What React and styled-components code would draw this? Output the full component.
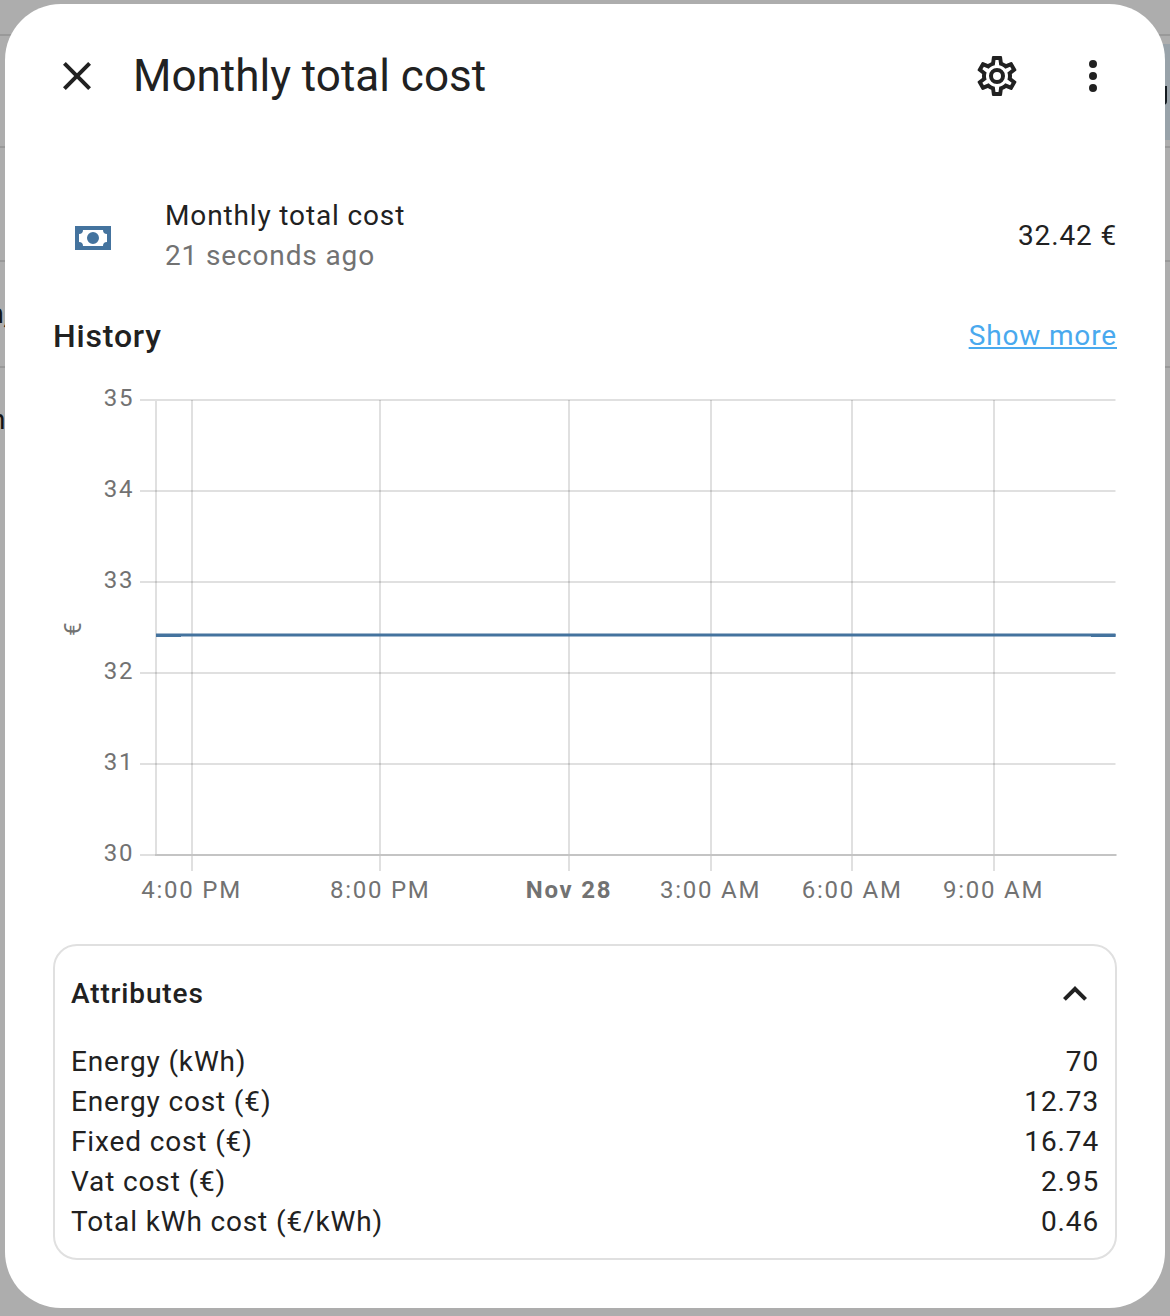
import React from "react";
import styled, { createGlobalStyle } from "styled-components";

const Global = createGlobalStyle`
  * { box-sizing: border-box; }
  body {
    margin: 0;
    background: #adadad;
    font-family: Roboto, "Liberation Sans", sans-serif;
    color: #212121;
  }
`;

const Page = styled.div`
  position: relative;
  height: 1316px;
  overflow: hidden;
  padding: 4px 5px 8px;
`;

const Backdrop = styled.div`
  position: absolute;
  inset: 0;
`;

const BackRow = styled.div`
  height: ${(p) => p.$height}px;
  border-bottom: ${(p) => (p.$last ? 0 : 2)}px solid #999;
  display: flex;
  align-items: center;
`;

const BackText = styled.span`
  margin-left: -${(p) => p.$shift}px;
  font-size: 28px;
  line-height: 32px;
  color: #141414;
  font-weight: ${(p) => (p.$strong ? 500 : 400)};
`;

const BackButton = styled.div`
  width: 20px;
  height: 96px;
  margin: 2px 0 0 auto;
  background: #98a2a9;
  display: flex;
  align-items: center;
`;

const BackMark = styled.span`
  width: 17px;
  height: 19px;
  margin-top: 7px;
  border-radius: 0 0 4px 0;
  background: #141a1f;
`;

const Dialog = styled.main`
  position: relative;
  height: 1304px;
  background: #fff;
  border-radius: 56px;
  padding: 24px 48px 0;
`;

const Header = styled.header`
  display: flex;
  align-items: center;
  height: 96px;
`;

const Title = styled.h1`
  flex: 1;
  margin: 0 0 0 32px;
  font-size: 44px;
  font-weight: 400;
  line-height: 56px;
`;

const IconButton = styled.button`
  display: flex;
  width: 48px;
  height: 48px;
  padding: 0;
  border: 0;
  background: none;
  color: inherit;
  margin-left: ${(p) => p.$gap || 0}px;
`;

const StateRow = styled.section`
  display: flex;
  align-items: center;
  height: 80px;
  margin-top: 72px;
`;

const StateIcon = styled.div`
  width: 80px;
  height: 48px;
  padding-left: 16px;
  margin-top: 4px;
  color: #44739e;
`;

const StateInfo = styled.div`
  flex: 1;
  margin-left: 32px;
`;

const Line = styled.div`
  font-size: 28px;
  line-height: 40px;
  letter-spacing: 0.86px;
  color: ${(p) => (p.$muted ? "#727272" : "#212121")};
`;

const SectionHead = styled.div`
  display: flex;
  justify-content: space-between;
  align-items: center;
  height: 48px;
  margin-top: 36px;
`;

const SectionTitle = styled.h2`
  margin: 0;
  font-size: 32px;
  font-weight: 500;
  letter-spacing: 0.82px;
`;

const MoreLink = styled.a`
  font-size: 28px;
  line-height: 40px;
  letter-spacing: 0.86px;
  color: #49a9ee;
  text-decoration: underline;
`;

const Chart = styled.svg`
  display: block;
  width: 1064px;
  height: 560px;
  margin-top: 20px;
  overflow: visible;
`;

const AxisText = styled.text`
  font-size: 24px;
  letter-spacing: 1.75px;
  fill: #727272;
  font-weight: ${(p) => (p.$strong ? 700 : 400)};
  text-anchor: ${(p) => p.$anchor || "middle"};
`;

const Card = styled.section`
  height: 316px;
  margin-top: 4px;
  padding: 16px 16px 0 16px;
  border: 2px solid #e0e0e0;
  border-radius: 24px;
`;

const CardHead = styled.div`
  display: flex;
  justify-content: space-between;
  align-items: center;
  height: 64px;
`;

const CardTitle = styled.h3`
  margin: 0;
  font-size: 28px;
  line-height: 34px;
  font-weight: 500;
  letter-spacing: 0.86px;
`;

const Attribute = styled.div`
  display: flex;
  justify-content: space-between;
  font-size: 28px;
  line-height: 40px;
  letter-spacing: 0.86px;
`;

const AttributeList = styled.div`
  margin-top: 16px;
`;

const icons = {
  close:
    "M19,6.41L17.59,5L12,10.59L6.41,5L5,6.41L10.59,12L5,17.59L6.41,19L12,13.41L17.59,19L19,17.59L13.41,12L19,6.41Z",
  cog: "M12,8A4,4 0 0,1 16,12A4,4 0 0,1 12,16A4,4 0 0,1 8,12A4,4 0 0,1 12,8M12,10A2,2 0 0,0 10,12A2,2 0 0,0 12,14A2,2 0 0,0 14,12A2,2 0 0,0 12,10M10,22C9.75,22 9.54,21.82 9.5,21.58L9.13,18.93C8.5,18.68 7.96,18.34 7.44,17.94L4.95,18.95C4.73,19.03 4.46,18.95 4.34,18.73L2.34,15.27C2.21,15.05 2.27,14.78 2.46,14.63L4.57,12.97L4.5,12L4.57,11L2.46,9.37C2.27,9.22 2.21,8.95 2.34,8.73L4.34,5.27C4.46,5.05 4.73,4.96 4.95,5.05L7.44,6.05C7.96,5.66 8.5,5.32 9.13,5.07L9.5,2.42C9.54,2.18 9.75,2 10,2H14C14.25,2 14.46,2.18 14.5,2.42L14.87,5.07C15.5,5.32 16.04,5.66 16.56,6.05L19.05,5.05C19.27,4.96 19.54,5.05 19.66,5.27L21.66,8.73C21.79,8.95 21.73,9.22 21.54,9.37L19.43,11L19.5,12L19.43,13L21.54,14.63C21.73,14.78 21.79,15.05 21.66,15.27L19.66,18.73C19.54,18.95 19.27,19.04 19.05,18.95L16.56,17.95C16.04,18.34 15.5,18.68 14.87,18.93L14.5,21.58C14.46,21.82 14.25,22 14,22H10M11.25,4L10.88,6.61C9.68,6.86 8.62,7.5 7.85,8.39L5.44,7.35L4.69,8.65L6.8,10.2C6.4,11.37 6.4,12.64 6.8,13.8L4.68,15.36L5.43,16.66L7.86,15.62C8.63,16.5 9.68,17.14 10.87,17.38L11.24,20H12.76L13.13,17.39C14.32,17.14 15.37,16.5 16.14,15.62L18.57,16.66L19.32,15.36L17.2,13.81C17.6,12.64 17.6,11.37 17.2,10.2L19.31,8.65L18.56,7.35L16.15,8.39C15.38,7.5 14.32,6.86 13.12,6.62L12.75,4H11.25Z",
  dots: "M12,16A2,2 0 0,1 14,18A2,2 0 0,1 12,20A2,2 0 0,1 10,18A2,2 0 0,1 12,16M12,10A2,2 0 0,1 14,12A2,2 0 0,1 12,14A2,2 0 0,1 10,12A2,2 0 0,1 12,10M12,4A2,2 0 0,1 14,6A2,2 0 0,1 12,8A2,2 0 0,1 10,6A2,2 0 0,1 12,4Z",
  cash: "M3,6H21V18H3V6M12,9A3,3 0 0,1 15,12A3,3 0 0,1 12,15A3,3 0 0,1 9,12A3,3 0 0,1 12,9M7,8A2,2 0 0,1 5,10V14A2,2 0 0,1 7,16H17A2,2 0 0,1 19,14V10A2,2 0 0,1 17,8H7Z",
  chevronUp: "M7.41,15.41L12,10.83L16.59,15.41L18,14L12,8L6,14L7.41,15.41Z",
};

const Icon = ({ name }) => (
  <svg width="48" height="48" viewBox="0 0 24 24" fill="currentColor">
    <path d={icons[name]} />
  </svg>
);

const yTicks = [35, 34, 33, 32, 31, 30];
const xTicks = [
  { x: 192, labelX: 191.6, label: "4:00 PM" },
  { x: 380, labelX: 380.2, label: "8:00 PM" },
  { x: 569, labelX: 569, label: "Nov 28", strong: true },
  { x: 711, labelX: 710.6, label: "3:00 AM" },
  { x: 852, labelX: 852.2, label: "6:00 AM" },
  { x: 994, labelX: 993.6, label: "9:00 AM" },
];
const attributes = [
  ["Energy (kWh)", "70"],
  ["Energy cost (€)", "12.73"],
  ["Fixed cost (€)", "16.74"],
  ["Vat cost (€)", "2.95"],
  ["Total kWh cost (€/kWh)", "0.46"],
];

const HistoryChart = () => (
  <Chart viewBox="53 380 1064 560">
    <g stroke="#000" strokeOpacity="0.12" strokeWidth="2">
      {yTicks.map((t, i) => (
        <line key={t} x1="140" x2={i === 5 ? 155 : 1115.5} y1={400 + i * 91} y2={400 + i * 91} />
      ))}
      <line x1="156" x2="156" y1="401" y2="854" />
      {xTicks.map((t) => (
        <line key={t.x} x1={t.x} x2={t.x} y1="400" y2="871" />
      ))}
    </g>
    <line x1="155" x2="1116.5" y1="855" y2="855" stroke="#c4c4c4" strokeWidth="2" />
    <line x1="156" x2="1115.5" y1="635" y2="635" stroke="#44739e" strokeWidth="3" />
    <path d="M156 635.5H181M1091 635.5H1115.5" stroke="#44739e" strokeWidth="3" />
    {yTicks.map((t, i) => (
      <AxisText key={t} x="134.3" y={406 + i * 91} $anchor="end">
        {t}
      </AxisText>
    ))}
    {xTicks.map((t) => (
      <AxisText key={t.x} x={t.labelX} y="898" $strong={t.strong}>
        {t.label}
      </AxisText>
    ))}
    <AxisText transform="translate(81 628) rotate(-90)">€</AxisText>
  </Chart>
);

export default function App() {
  return (
    <Page>
      <Global />
      <Backdrop>
        <BackRow $height={36} />
        <BackRow $height={112}>
          <BackButton>
            <BackMark />
          </BackButton>
        </BackRow>
        <BackRow $height={114} />
        <BackRow $height={106}>
          <BackText $strong $shift={12}>n,</BackText>
        </BackRow>
        <BackRow $height={104} $last>
          <BackText $shift={10}>n</BackText>
        </BackRow>
      </Backdrop>
      <Dialog>
        <Header>
          <IconButton aria-label="Close">
            <Icon name="close" />
          </IconButton>
          <Title>Monthly total cost</Title>
          <IconButton aria-label="Settings">
            <Icon name="cog" />
          </IconButton>
          <IconButton aria-label="Menu" $gap={48}>
            <Icon name="dots" />
          </IconButton>
        </Header>
        <StateRow>
          <StateIcon>
            <Icon name="cash" />
          </StateIcon>
          <StateInfo>
            <Line>Monthly total cost</Line>
            <Line $muted>21 seconds ago</Line>
          </StateInfo>
          <Line>32.42 €</Line>
        </StateRow>
        <SectionHead>
          <SectionTitle>History</SectionTitle>
          <MoreLink>Show more</MoreLink>
        </SectionHead>
        <HistoryChart />
        <Card>
          <CardHead>
            <CardTitle>Attributes</CardTitle>
            <Icon name="chevronUp" />
          </CardHead>
          <AttributeList>
            {attributes.map(([name, value]) => (
              <Attribute key={name}>
                <span>{name}</span>
                <span>{value}</span>
              </Attribute>
            ))}
          </AttributeList>
        </Card>
      </Dialog>
    </Page>
  );
}
